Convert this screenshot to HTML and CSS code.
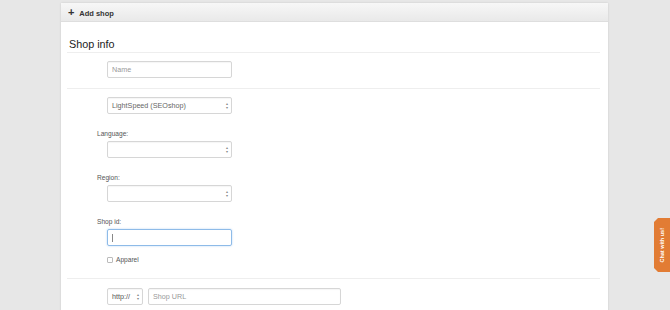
FILE: index.html
```html
<!DOCTYPE html>
<html lang="en">
<head>
    <meta charset="UTF-8">
    <meta name="viewport" content="width=device-width, initial-scale=1.0">
    <title>Add shop</title>
    <link rel="stylesheet" href="styles.css">
</head>
<body>
    <div class="panel">
        <div class="panel-head">
            <span class="plus">+</span> Add shop
        </div>
        <div class="panel-body">
            <h2>Shop info</h2>
            <div class="row row-name">
                <input type="text" class="ctrl" placeholder="Name">
            </div>
            <div class="row row-fields">
                <div class="select ctrl">LightSpeed (SEOshop)</div>
                <label>Language:</label>
                <div class="select ctrl"></div>
                <label>Region:</label>
                <div class="select ctrl"></div>
                <label>Shop id:</label>
                <div class="ctrl focused"><span class="caret"></span></div>
                <div class="check"><span class="box"></span> Apparel</div>
            </div>
            <div class="row row-url">
                <div class="select ctrl proto">http://</div>
                <div class="ctrl url">Shop URL</div>
            </div>
        </div>
    </div>

    <div class="chat-tab"><span>Chat with us!</span></div>
</body>
</html>
```

FILE: styles.css
```css
body {
    margin: 0;
    background-color: #e7e7e7;
    font-family: 'Liberation Sans', Arial, sans-serif;
    color: #333;
    height: 310px;
    overflow: hidden;
}
.panel {
    margin: 3px 0 0 61px;
    width: 547px;
    background-color: #fff;
    box-shadow: 0 0 2px rgba(0, 0, 0, 0.12);
    height: 320px;
}
.panel-head {
    height: 18px;
    line-height: 18px;
    padding-left: 7px;
    font-size: 7.5px;
    font-weight: bold;
    color: #333;
    background: linear-gradient(#f7f7f7, #e9e9e9);
    border-bottom: 1px solid #dedede;
}
.plus {
    font-size: 11px;
    margin-right: 3px;
}
.panel-body {
    padding: 0 8px 0 6px;
}
h2 {
    margin: 0;
    padding: 15px 0 0 2px;
    font-size: 10.8px;
    line-height: 15px;
    font-weight: normal;
    color: #222;
    border-bottom: 1px solid #eee;
}
.row {
    border-bottom: 1px solid #eee;
    display: flex;
    flex-direction: column;
    align-items: flex-start;
}
.row-name {
    padding: 8px 0 10px 40px;
}
.row-fields {
    padding: 8px 0 14px 40px;
}
.row-url {
    flex-direction: row;
    gap: 5px;
    padding: 9px 0 0 40px;
    border-bottom: none;
}
.ctrl {
    box-sizing: border-box;
    width: 125px;
    height: 17px;
    border: 1px solid #d6d6d6;
    border-radius: 2px;
    padding: 0 4px;
    font-family: 'Liberation Sans', Arial, sans-serif;
    font-size: 7.2px;
    line-height: 15px;
    color: #666;
    box-shadow: inset 0 1px 1px rgba(0, 0, 0, 0.04);
}
.ctrl::placeholder {
    color: #999;
}
.select {
    position: relative;
}
.select::after {
    content: "\25B4\A\25BE";
    white-space: pre;
    position: absolute;
    right: 3px;
    top: 4px;
    font-size: 4px;
    line-height: 3.5px;
    color: #888;
}
label {
    display: block;
    margin: 15px 0 3px -10px;
    font-size: 6.6px;
    line-height: 9px;
    color: #555;
}
.focused {
    border-color: #8ebbe8;
    box-shadow: 0 0 2px rgba(82, 150, 230, 0.45);
    display: flex;
    align-items: center;
}
.caret {
    width: 1px;
    height: 8px;
    background-color: #888;
}
.check {
    margin-top: 10px;
    font-size: 6.6px;
    line-height: 8px;
    color: #555;
    display: flex;
    align-items: center;
    gap: 3px;
}
.box {
    width: 4px;
    height: 4px;
    border: 1px solid #bbb;
    border-radius: 1px;
}
.proto {
    width: 36px;
    color: #555;
}
.url {
    width: 193px;
    color: #999;
}
.chat-tab {
    position: absolute;
    left: 654px;
    top: 218px;
    width: 16px;
    height: 54px;
    background-color: #e27c34;
    clip-path: polygon(4px 0, 100% 0, 100% 100%, 4px 100%, 0 calc(100% - 4px), 0 4px);
    display: flex;
    align-items: center;
    justify-content: center;
}
.chat-tab span {
    writing-mode: vertical-rl;
    transform: rotate(180deg);
    font-size: 5.5px;
    font-weight: bold;
    color: #fff;
    white-space: nowrap;
}
```
